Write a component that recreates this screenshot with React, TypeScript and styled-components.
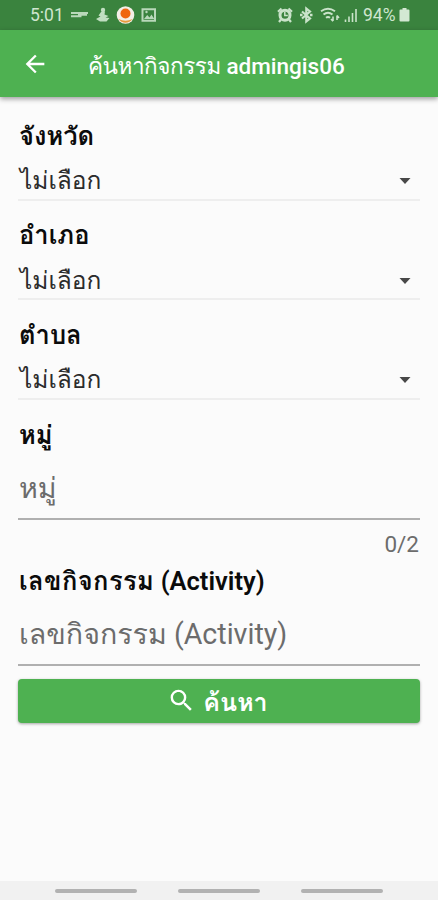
import React from "react";
import styled, { createGlobalStyle } from "styled-components";

const Global = createGlobalStyle`
  * { box-sizing: border-box; }
  body { margin: 0; background: #fbfbfb; }
`;

const Screen = styled.div`
  width: 438px;
  height: 900px;
  display: flex;
  flex-direction: column;
  overflow: hidden;
  background: #fbfbfb;
  color: #111;
  font-family: Roboto, Loma, sans-serif;
`;

const StatusBar = styled.header`
  flex: none;
  height: 30px;
  display: flex;
  align-items: center;
  justify-content: space-between;
  padding: 0 27px 0 30px;
  background: #3a833e;
  color: #cfe6cf;
`;

const StatusGroup = styled.div<{ $gap: number }>`
  display: flex;
  align-items: center;
  gap: ${(p) => p.$gap}px;
`;

const StatusText = styled.span<{ $w: number }>`
  width: ${(p) => p.$w}px;
  font-size: 17.5px;
  line-height: 20px;
  white-space: nowrap;
`;

const AppBar = styled.div`
  flex: none;
  height: 67px;
  display: flex;
  align-items: center;
  gap: 39px;
  padding: 0 0 0 21px;
  background: #4eb151;
  color: #fff;
  box-shadow: 0 2px 5px rgba(0, 0, 0, 0.38);
`;

const Title = styled.h1`
  margin: 0;
  padding-top: 4px;
  font-size: 22.5px;
  line-height: 30px;
  font-weight: 500;
  white-space: nowrap;
`;

const Thai = styled.span<{ $ls?: number }>`
  letter-spacing: ${(p) => p.$ls ?? 0}px;
`;

const Form = styled.main`
  flex: 1;
  padding: 20.6px 18px 0;
`;

const Label = styled.label`
  display: block;
  height: 36px;
  padding-left: 1px;
  font-size: 25.5px;
  line-height: 36px;
  font-weight: 600;
  color: #0b0b0b;
  white-space: nowrap;
`;

const SelectField = styled.div`
  height: 99.7px;
`;

const SelectBox = styled.div`
  display: flex;
  align-items: center;
  justify-content: space-between;
  height: 47px;
  padding: 10px 9px 0 2px;
  border-bottom: 2px solid #eeeeee;
  font-size: 24.5px;
  line-height: 36px;
  color: #2c2c2c;
`;

const InputField = styled.div<{ $h: number }>`
  height: ${(p) => p.$h}px;
`;

const InputBox = styled.div`
  display: flex;
  align-items: center;
  height: 67px;
  padding: 6px 0 0 1px;
  border-bottom: 2px solid #b0b0b0;
  font-size: 28.6px;
  line-height: 40px;
  color: #6c6c6c;
  white-space: nowrap;
`;

const Counter = styled.div`
  padding: 11px 1px 0 0;
  text-align: right;
  font-size: 22.5px;
  line-height: 26px;
  color: #6c6c6c;
`;

const Submit = styled.button`
  display: flex;
  align-items: center;
  justify-content: center;
  gap: 7px;
  width: 402px;
  height: 44px;
  padding: 0 3px 0 0;
  border: 0;
  border-radius: 4px;
  background: #4eb151;
  box-shadow: 0 1px 3px rgba(0, 0, 0, 0.35);
  color: #fff;
  font: 700 25px/36px Roboto, Loma, sans-serif;
`;

const SubmitText = styled.span`
  padding-top: 5px;
`;

const NavBar = styled.nav`
  flex: none;
  height: 19px;
  display: flex;
  justify-content: center;
  gap: 41px;
  padding-top: 8px;
  background: #f1f1f1;
`;

const NavPill = styled.span`
  width: 82px;
  height: 4px;
  border-radius: 2px;
  background: #b2b2b2;
`;

const Caret = () => (
  <svg width="12" height="6" viewBox="0 0 12 6"><path d="M0.5 0h11L6 6z" fill="#484848" /></svg>
);

const LeftIcons = () => (
  <svg width="88" height="20" viewBox="70 5 88 20" fill="none">
    <path d="M71 13h17M71 16.200h10.500M78 14.800h9" stroke="#b9d8ba" strokeWidth="2" />
    <g fill="#c0dec1">
      <circle cx="103" cy="10" r="2.200" />
      <path d="M101 12l4-.5-.5 3 4 1.500-3 1.500 4 .5-3 3.500h-6.500l-4-2.500 4.500-2.500-2-1z" />
    </g>
    <circle cx="125.500" cy="15" r="8.800" fill="#f4eee7" />
    <path d="M118.500 19q7 3.500 14 0a8.500 8.500 0 0 1-14 0z" fill="#e79b3d" />
    <circle cx="125.500" cy="13.500" r="5" fill="#ef6510" />
    <path d="M142.500 9.200h12.500v11.500h-12.500z" stroke="#b9d8ba" strokeWidth="2" />
    <path d="M144 19l3.200-4 2.300 2.500 2-3 2.800 4.500z" fill="#b9d8ba" />
    <circle cx="146.500" cy="12" r="1.200" fill="#b9d8ba" />
  </svg>
);

const RightIcons = () => (
  <svg width="82" height="20" viewBox="277 5 82 20" fill="none">
    <g stroke="#cae3ca">
      <circle cx="286" cy="15.200" r="5" strokeWidth="3" />
      <path d="M279 11.800l3.500-3.300M289.500 8.500l3.500 3.300M282 19.500l-2 2.500M290 19.500l2 2.500" strokeWidth="2.200" />
      <path d="M285.800 12v3.500h3" strokeWidth="1.500" />
      <path d="M303 11.500l8 7-3.700 3v-13l3.700 3-8 7" strokeWidth="2.200" />
      <path d="M301 15h2.500M311 15h2.500" strokeWidth="2.300" />
      <path d="M322 11.300q7-5 14 0M324.500 14.500q4.500-3.500 9 0M327 17.700q2-1.500 4 0" strokeWidth="1.900" />
      <path d="M334 21v-4.500M332 19l2 2.200M338 15.500v4.500M340 18l-2-2.500" strokeWidth="1.600" />
      <path d="M346.500 22v-2.500M350 22v-5.500M353.500 22v-9M357 22V9" strokeWidth="1.600" />
    </g>
  </svg>
);

const Battery = () => (
  <svg width="12" height="16" viewBox="0 0 12 16"><path d="M3.500 1h4v1.500h2q1 0 1 1v10q0 1-1 1h-8q-1 0-1-1v-10q0-1 1-1h2z" fill="#d3e8d3" /></svg>
);

const selects = ["จังหวัด", "อำเภอ", "ตำบล"];

export default function App() {
  return (
    <Screen>
      <Global />
      <StatusBar>
        <StatusGroup $gap={8}>
          <StatusText $w={32}>5:01</StatusText>
          <LeftIcons />
        </StatusGroup>
        <StatusGroup $gap={5}>
          <RightIcons />
          <StatusGroup $gap={1}>
            <StatusText $w={35}>94%</StatusText>
            <Battery />
          </StatusGroup>
        </StatusGroup>
      </StatusBar>
      <AppBar>
        <svg width="28" height="28" viewBox="0 0 24 24" fill="#fff">
          <path d="M20 11H7.830l5.590-5.590L12 4l-8 8 8 8 1.410-1.410L7.830 13H20v-2z" />
        </svg>
        <Title><Thai $ls={-0.45}>ค้นหากิจกรรม</Thai> admingis06</Title>
      </AppBar>
      <Form>
        {selects.map((name) => (
          <SelectField key={name}>
            <Label>{name}</Label>
            <SelectBox><span>ไม่เลือก</span><Caret /></SelectBox>
          </SelectField>
        ))}
        <InputField $h={146}>
          <Label>หมู่</Label>
          <InputBox>หมู่</InputBox>
          <Counter>0/2</Counter>
        </InputField>
        <InputField $h={116.3}>
          <Label><Thai $ls={0.4}>เลขกิจกรรม</Thai> (Activity)</Label>
          <InputBox><span><Thai>เลขกิจกรรม</Thai> (Activity)</span></InputBox>
        </InputField>
        <Submit>
          <svg width="29" height="29" viewBox="0 0 24 24" fill="#fff">
            <path d="M15.500 14h-.79l-.28-.27A6.471 6.471 0 0 0 16 9.500 6.500 6.500 0 1 0 9.500 16c1.610 0 3.090-.59 4.230-1.570l.27.28v.79l5 4.990L20.490 19l-4.990-5zm-6 0C7.010 14 5 11.990 5 9.500S7.010 5 9.500 5 14 7.010 14 9.500 11.990 14 9.500 14z" />
          </svg>
          <SubmitText>ค้นหา</SubmitText>
        </Submit>
      </Form>
      <NavBar><NavPill /><NavPill /><NavPill /></NavBar>
    </Screen>
  );
}
